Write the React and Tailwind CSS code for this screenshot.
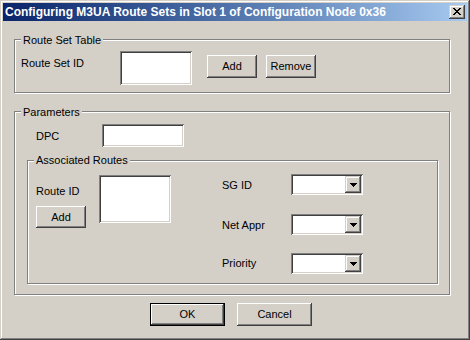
import React from "react";

const SUNKEN =
  "shadow-[inset_1px_1px_#808080,inset_-1px_-1px_#ffffff,inset_2px_2px_#404040,inset_-2px_-2px_#d4d0c8]";

function Button({ children, className }) {
  return (
    <div
      className={`flex items-center justify-center bg-[#d4d0c8] shadow-[inset_-1px_-1px_#404040,inset_1px_1px_#ffffff,inset_-2px_-2px_#808080,inset_2px_2px_#d4d0c8] ${className}`}
    >
      {children}
    </div>
  );
}

function Combo() {
  return (
    <div className="flex justify-end w-[72px] h-[21px] bg-white p-[2px] shadow-[inset_1px_1px_#808080,inset_-1px_-1px_#ffffff,inset_2px_2px_#404040,inset_-2px_-2px_#d4d0c8]">
      <div className="flex w-[16px] h-[17px] items-center justify-center bg-[#d4d0c8] shadow-[inset_-1px_-1px_#404040,inset_1px_1px_#d4d0c8,inset_-2px_-2px_#808080,inset_2px_2px_#ffffff]">
        <svg width="7" height="4" shapeRendering="crispEdges" className="block">
          <rect x="0" y="0" width="7" height="1" fill="#000" />
          <rect x="1" y="1" width="5" height="1" fill="#000" />
          <rect x="2" y="2" width="3" height="1" fill="#000" />
          <rect x="3" y="3" width="1" height="1" fill="#000" />
        </svg>
      </div>
    </div>
  );
}

function Group({ label, className, labelClass, children }) {
  return (
    <div
      className={`relative border border-[#808080] shadow-[inset_1px_1px_#ffffff,1px_1px_#ffffff] ${className}`}
    >
      <span className={`absolute left-[6px] bg-[#d4d0c8] px-[2px] leading-[13px] whitespace-nowrap ${labelClass}`}>
        {label}
      </span>
      {children}
    </div>
  );
}

export default function App() {
  return (
    <div className="w-[470px] h-[340px] bg-[#d4d0c8] p-[3px] font-['Liberation_Sans',Arial,sans-serif] text-[11px] leading-[13px] text-black shadow-[inset_-1px_-1px_#404040,inset_1px_1px_#d4d0c8,inset_-2px_-2px_#808080,inset_2px_2px_#ffffff]">
      {/* Title bar */}
      <div className="flex h-[18px] items-center justify-between bg-gradient-to-r from-[#0a246a] to-[#a6caf0] pl-[2px] pr-[2px]">
        <span className="mt-[1px] whitespace-nowrap text-[12px] font-bold leading-[13px] text-white">
          Configuring M3UA Route Sets in Slot 1 of Configuration Node 0x36
        </span>
        <div className="flex w-[16px] h-[14px] items-start justify-start bg-[#d4d0c8] pl-[4px] pt-[3px] shadow-[inset_-1px_-1px_#404040,inset_1px_1px_#d4d0c8,inset_-2px_-2px_#808080,inset_2px_2px_#ffffff]">
          <svg width="8" height="7" shapeRendering="crispEdges" className="block">
            <rect x="0" y="0" width="2" height="1" fill="#000" />
            <rect x="6" y="0" width="2" height="1" fill="#000" />
            <rect x="1" y="1" width="2" height="1" fill="#000" />
            <rect x="5" y="1" width="2" height="1" fill="#000" />
            <rect x="2" y="2" width="4" height="1" fill="#000" />
            <rect x="3" y="3" width="2" height="1" fill="#000" />
            <rect x="2" y="4" width="4" height="1" fill="#000" />
            <rect x="1" y="5" width="2" height="1" fill="#000" />
            <rect x="5" y="5" width="2" height="1" fill="#000" />
            <rect x="0" y="6" width="2" height="1" fill="#000" />
            <rect x="6" y="6" width="2" height="1" fill="#000" />
          </svg>
        </div>
      </div>

      {/* Body */}
      <div className="pl-[11px]">
        {/* Route Set Table */}
        <Group label="Route Set Table" className="mt-[18px] w-[436px] h-[54px]" labelClass="top-[-6px]">
          <div className="flex items-start">
            <span className="ml-[6px] mt-[17px] w-[99px]">Route Set ID</span>
            <div className={`mt-[11px] w-[72px] h-[34px] bg-white ${SUNKEN}`} />
            <Button className="ml-[15px] mt-[15px] w-[50px] h-[23px]">Add</Button>
            <Button className="ml-[9px] mt-[15px] w-[50px] h-[23px]">Remove</Button>
          </div>
        </Group>

        {/* Parameters */}
        <Group label="Parameters" className="mt-[18px] w-[436px] h-[184px]" labelClass="top-[-6px]">
          <div className="flex items-start">
            <span className="ml-[21px] mt-[18px] w-[66px]">DPC</span>
            <div className={`mt-[12px] w-[82px] h-[23px] bg-white ${SUNKEN}`} />
          </div>

          <Group
            label="Associated Routes"
            className="ml-[12px] mt-[13px] w-[411px] h-[124px]"
            labelClass="top-[-7px]"
          >
            <div className="flex items-start">
              <div className="ml-[8px] flex w-[63px] flex-col items-start">
                <span className="mt-[24px]">Route ID</span>
                <Button className="mt-[8px] w-[50px] h-[22px]">Add</Button>
              </div>
              <div className={`mt-[14px] w-[72px] h-[48px] bg-white ${SUNKEN}`} />
              <div className="ml-[51px] flex flex-col">
                <div className="mt-[13px] flex items-start">
                  <span className="mt-[5px] w-[69px]">SG ID</span>
                  <Combo />
                </div>
                <div className="mt-[19px] flex items-start">
                  <span className="mt-[5px] w-[69px]">Net Appr</span>
                  <Combo />
                </div>
                <div className="mt-[18px] flex items-start">
                  <span className="mt-[4px] w-[69px]">Priority</span>
                  <Combo />
                </div>
              </div>
            </div>
          </Group>
        </Group>

        {/* Bottom buttons */}
        <div className="mt-[8px] flex">
          <div className="ml-[136px] w-[75px] h-[23px] border border-black">
            <Button className="w-full h-full">OK</Button>
          </div>
          <Button className="ml-[12px] w-[75px] h-[23px]">Cancel</Button>
        </div>
      </div>
    </div>
  );
}
